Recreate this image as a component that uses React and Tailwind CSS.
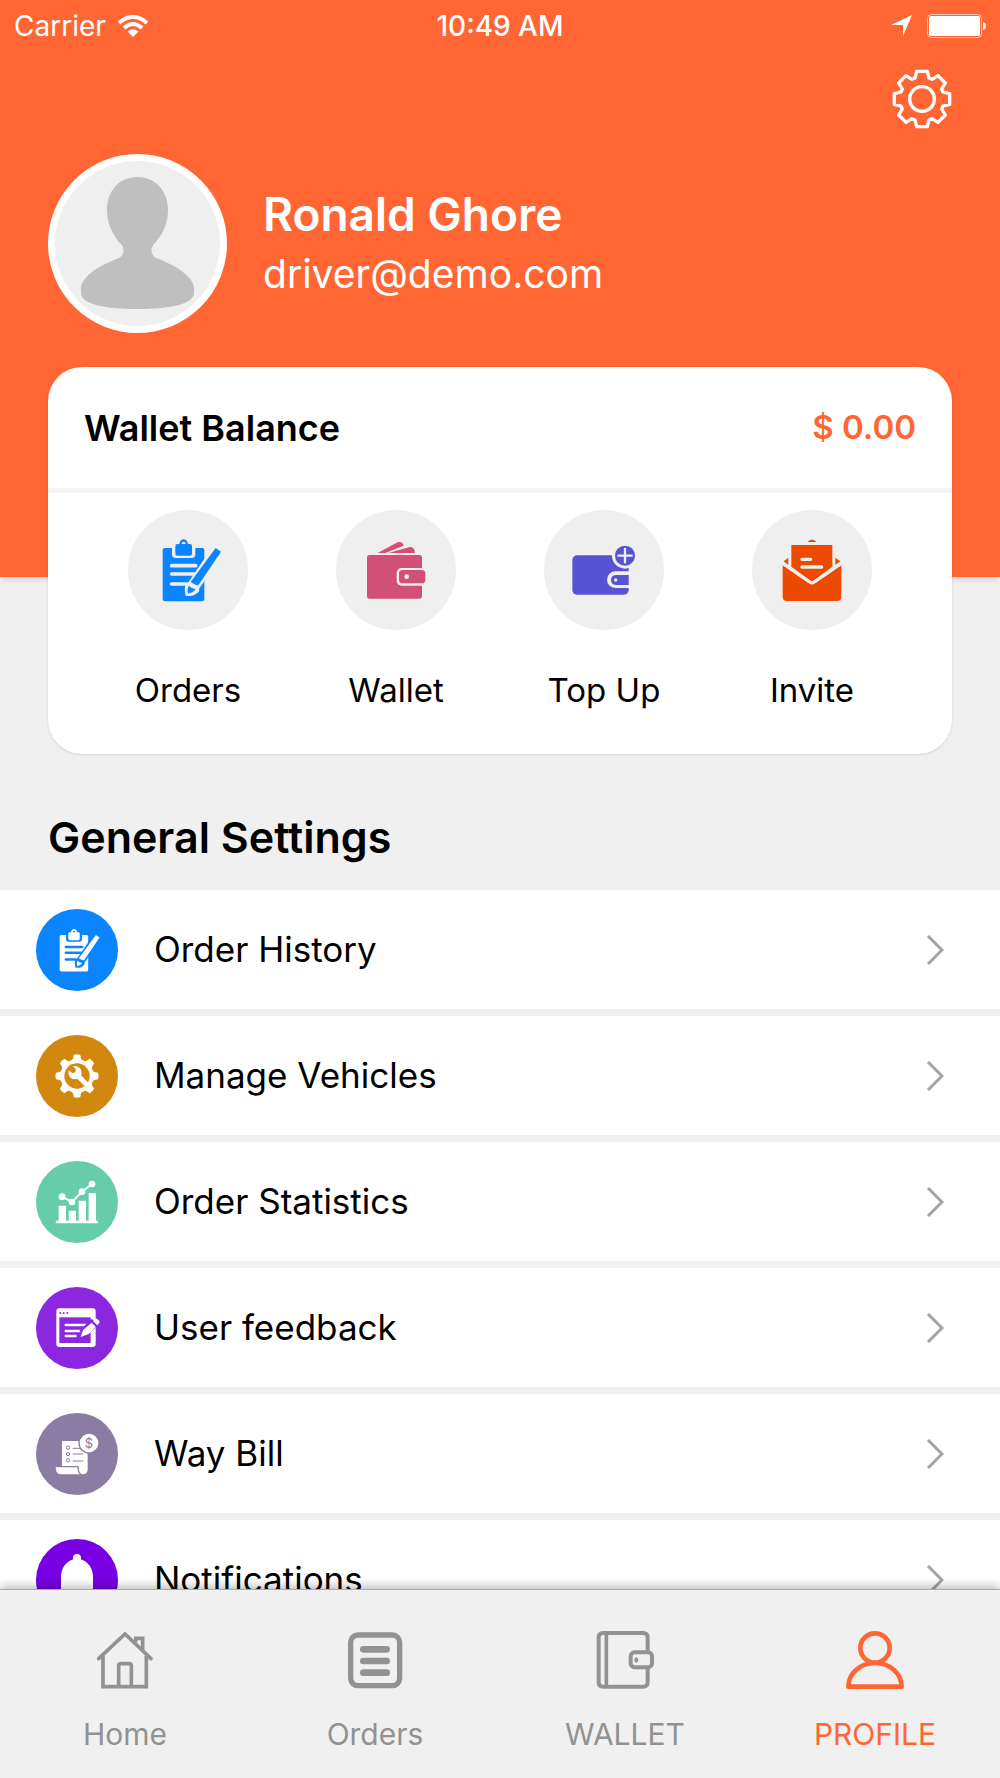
import React, { useState } from 'react';

const ClipboardIcon = ({ fg, bg, className }) => (
  <svg viewBox="26 30 360 360" className={className} fill={fg} aria-hidden="true">
    <rect x="130" y="144" width="125" height="160" rx="7" />
    <rect x="158" y="122" width="70" height="52" rx="11" fill={bg} />
    <path d="M174 132 H180 C181 113 205 113 206 132 H212 Q218 132 218 138 V161 Q218 167 212 167 H174 Q168 167 168 161 V138 Q168 132 174 132 Z" />
    <path d="M187 132 Q187 125 193 125 Q199 125 199 132 Z" fill={bg} />
    <path d="M157 197 H229 M157 222 H229 M157 252 H200" stroke={bg} strokeWidth="11" strokeLinecap="round" />
    <path d="M296 150 L214 270" stroke={bg} strokeWidth="38" />
    <path d="M203 247 C193 262 197 276 199 287 C214 291 232 286 241 270 Z" fill={bg} />
    <path d="M289 144 L305 155 L238 254 Q233 259 214 246 Z" />
    <path d="M208 257 Q216 266 229 267 Q222 279 206 280 Q203 268 208 257 Z" />
  </svg>
);

const WalletIcon = ({ fg, bg, className }) => (
  <svg viewBox="649 30 360 360" className={className} fill={fg} aria-hidden="true">
    <path d="M774 159 L834 127 Q848 122 852 137 L797 159 Z" />
    <path d="M806 159 L870 141 Q884 138 886 159 Z" />
    <rect x="742" y="165" width="165" height="131" rx="8" />
    <rect x="831" y="204" width="92" height="53" rx="15" fill={bg} />
    <rect x="838" y="210" width="79" height="40" rx="11" />
    <circle cx="861" cy="230" r="7" fill={bg} />
  </svg>
);

const TopUpIcon = ({ fg, bg, className }) => (
  <svg viewBox="42 30 360 360" className={className} fill={fg} aria-hidden="true">
    <rect x="127" y="166" width="169" height="118" rx="14" />
    <circle cx="285" cy="167" r="39" fill={bg} />
    <circle cx="285" cy="167" r="30" />
    <path d="M265 167 H305 M285 147 V187" stroke={bg} strokeWidth="7" strokeLinecap="round" />
    <path d="M298 214 H256 A25 25 0 0 0 256 264 H298 Z" fill={bg} />
    <path d="M296 225 H260 Q243 225 243 240 Q243 255 260 255 H296 Z" />
    <circle cx="257" cy="240" r="5" fill={bg} />
  </svg>
);

const InviteIcon = ({ fg, bg, className }) => (
  <svg viewBox="665 30 360 360" className={className} fill={fg} aria-hidden="true">
    <path d="M831 126 Q845 111 859 126 Z" />
    <path d="M783 135 H906 V200 L852 241 Q845 246 838 241 L783 200 Z" />
    <path d="M774 173 L760 184 L774 195 Z M915 173 L930 184 L915 195 Z" />
    <path d="M757 196 L836 250 Q845 257 854 250 L933 196 V290 Q933 303 920 303 H770 Q757 303 757 290 Z" />
    <path d="M757 190 L837 245 Q845 251 853 245 L933 190" fill="none" stroke={bg} strokeWidth="9" />
    <path d="M815 178 H841 M815 201 H874" stroke={bg} strokeWidth="10" strokeLinecap="round" />
  </svg>
);

const VehicleIcon = ({ fg, bg, className }) => (
  <svg viewBox="-123 -123 246 246" className={className} fill={fg} aria-hidden="true">
    <circle r="50" />
    {[0, 45, 90, 135, 180, 225, 270, 315].map((angle) => (
      <path key={angle} d="M-18 -44 L-12 -52 L-10 -63 Q0 -67 10 -63 L12 -52 L18 -44 Z" transform={`rotate(${angle})`} />
    ))}
    <circle r="38" fill={bg} />
    <path d="M-5 -9 L34 31" stroke={fg} strokeWidth="15" strokeLinecap="round" />
    <circle cx="-6" cy="-10" r="20" />
    <path d="M-31 -22 L-18 -35 L-4 -20 Q-2 -8 -14 -9 Z" fill={bg} />
  </svg>
);

const StatsIcon = ({ fg, className }) => (
  <svg viewBox="49 64 246 246" className={className} fill={fg} aria-hidden="true">
    <path d="M117 198 h22 v46 h-22 Z M147 213 h22 v31 h-22 Z M177 183 h22 v61 h-22 Z M207 160 h22 v84 h-22 Z" />
    <rect x="108" y="243" width="127" height="8" rx="3" />
    <path d="M127 171 L157 187 L187 156 L217 133" fill="none" stroke={fg} strokeWidth="6" />
    <circle cx="127" cy="171" r="10" />
    <circle cx="157" cy="187" r="10" />
    <circle cx="187" cy="156" r="10" />
    <circle cx="217" cy="133" r="10" />
  </svg>
);

const FeedbackIcon = ({ fg, bg, className }) => (
  <svg viewBox="49 441 246 246" className={className} fill={fg} aria-hidden="true">
    <rect x="110" y="505" width="118" height="116" rx="9" />
    <rect x="119" y="532" width="94" height="77" fill={bg} />
    <circle cx="122" cy="519" r="3" fill={bg} />
    <circle cx="132" cy="519" r="3" fill={bg} />
    <circle cx="143" cy="519" r="3" fill={bg} />
    <path d="M138 555 H197 M138 573 H190 M138 588 H168" stroke={fg} strokeWidth="7" strokeLinecap="round" />
    <path d="M226 546 L188 582" stroke={bg} strokeWidth="27" />
    <path d="M227 536 Q230 534 233 537 L239 543 Q241 547 238 550 L233 556 L220 543 Z" />
    <path d="M216 548 L228 560 L209 581 L183 591 L190 570 Z" />
  </svg>
);

const WayBillIcon = ({ fg, bg, className }) => (
  <svg viewBox="49 67 246 246" className={className} fill={fg} aria-hidden="true">
    <path d="M127 151 H204 V238 Q202 251 189 251 Q177 250 177 226 H127 Z" />
    <path d="M108 230 H173 Q174 245 180 251 H122 Q108 250 108 230 Z" />
    <g fill="none" stroke={bg} strokeWidth="3">
      <circle cx="145" cy="171" r="5" />
      <circle cx="145" cy="190" r="5" />
      <circle cx="145" cy="209" r="5" />
      <path d="M159 173 H186 M159 190 H191 M159 211 H191" />
    </g>
    <circle cx="208" cy="157" r="32" fill={bg} />
    <circle cx="208" cy="157" r="28" />
    <text x="208" y="171" textAnchor="middle" fontSize="39" fill={bg}>$</text>
  </svg>
);

const BellIcon = ({ fg, className }) => (
  <svg viewBox="49 444 246 246" className={className} fill={fg} aria-hidden="true">
    <circle cx="172" cy="501" r="12" />
    <path d="M124 555 C126 522 148 504 172 504 C196 504 218 522 220 555 V600 L232 622 H112 L124 600 Z" />
    <path d="M156 628 H188 Q186 642 172 642 Q158 642 156 628 Z" />
  </svg>
);

const SettingsIcon = () => (
  <svg viewBox="-90 -90 180 180" className="size-[60px]" fill="none" stroke="currentColor" strokeWidth="10" strokeLinejoin="round" aria-hidden="true">
    <path d="M-21 -63 L-16 -83 L16 -83 L21 -63 L30 -59 L48 -70 L70 -48 L59 -30 L63 -21 L83 -16 L83 16 L63 21 L59 30 L70 48 L48 70 L30 59 L21 63 L16 83 L-16 83 L-21 63 L-30 59 L-48 70 L-70 48 L-59 30 L-63 21 L-83 16 L-83 -16 L-63 -21 L-59 -30 L-70 -48 L-48 -70 L-30 -59 Z" />
    <circle r="37" />
  </svg>
);

const HomeTabIcon = () => (
  <svg viewBox="105 151 180 180" className="size-[60px]" fill="none" stroke="currentColor" strokeWidth="11" aria-hidden="true">
    <path d="M116 237 L195 163 L273 237" strokeLinecap="round" />
    <path d="M129 228 V321 H259 V228 M222 176 H248 V210 M227 178 V188" />
    <path d="M176 321 V259 Q176 252 183 252 H207 Q214 252 214 259 V321" />
  </svg>
);

const OrdersTabIcon = () => (
  <svg viewBox="857 151 180 180" className="size-[60px]" fill="none" stroke="currentColor" aria-hidden="true">
    <rect x="874" y="166" width="147" height="152" rx="22" strokeWidth="16" />
    <path d="M912 209 H982 M912 244 H982 M912 279 H982" strokeWidth="20" strokeLinecap="round" />
  </svg>
);

const WalletTabIcon = () => (
  <svg viewBox="167 151 180 180" className="size-[60px]" fill="none" stroke="currentColor" strokeWidth="12" aria-hidden="true">
    <path d="M325 214 V174 Q325 160 311 160 H191 Q178 160 178 174 V306 Q178 321 191 321 H311 Q325 321 325 306 V268" />
    <path d="M201 160 V321" strokeWidth="11" />
    <rect x="274" y="218" width="64" height="45" rx="12" />
    <ellipse cx="291" cy="241" rx="6" ry="8" fill="currentColor" stroke="none" />
  </svg>
);

const ProfileTabIcon = () => (
  <svg viewBox="913 151 180 180" className="size-[60px]" fill="none" stroke="currentColor" strokeWidth="14" strokeLinejoin="round" aria-hidden="true">
    <circle cx="1003" cy="205" r="44" />
    <path d="M923 321 H1083 C1083 280 1046 250 1003 250 C960 250 923 280 923 321 Z" />
  </svg>
);

const quickActions = [
  { label: 'Orders', icon: ClipboardIcon, color: '#0b85ff' },
  { label: 'Wallet', icon: WalletIcon, color: '#d24f78' },
  { label: 'Top Up', icon: TopUpIcon, color: '#5753d3' },
  { label: 'Invite', icon: InviteIcon, color: '#ec4a00' },
];

const settings = [
  { label: 'Order History', icon: ClipboardIcon, color: '#0b85ff', circle: 'bg-[#0b85ff]' },
  { label: 'Manage Vehicles', icon: VehicleIcon, color: '#d2870f', circle: 'bg-[#d2870f]' },
  { label: 'Order Statistics', icon: StatsIcon, color: '#66cca9', circle: 'bg-[#66cca9]' },
  { label: 'User feedback', icon: FeedbackIcon, color: '#8a27df', circle: 'bg-[#8a27df]' },
  { label: 'Way Bill', icon: WayBillIcon, color: '#8a7ca2', circle: 'bg-[#8a7ca2]' },
  { label: 'Notifications', icon: BellIcon, color: '#7900e2', circle: 'bg-[#7900e2]' },
];

const tabs = [
  { label: 'Home', icon: HomeTabIcon },
  { label: 'Orders', icon: OrdersTabIcon },
  { label: 'WALLET', icon: WalletTabIcon },
  { label: 'PROFILE', icon: ProfileTabIcon },
];

const StatusBar = () => (
  <div className="grid grid-cols-3 items-center h-[52px] px-[14px] text-[28px] leading-8">
    <div className="flex items-center gap-3">
      <span>Carrier</span>
      <svg viewBox="0 0 30 22" className="w-[30px] h-[22px]" fill="none" stroke="currentColor" strokeWidth="4" aria-hidden="true">
        <path d="M1 8 Q15 -4 29 8" />
        <path d="M6 13 Q15 5 24 13" />
        <path d="M15 22 L9.500 16.500 Q15 12 20.500 16.500 Z" fill="currentColor" stroke="none" />
      </svg>
    </div>
    <span className="text-center font-medium">10:49 AM</span>
    <div className="flex items-center justify-end gap-[14px]">
      <svg viewBox="0 0 22 22" className="size-[22px]" fill="currentColor" aria-hidden="true">
        <path d="M0 10 L21 0 L12 21 V10 Z" />
      </svg>
      <svg viewBox="0 0 59 24" className="w-[59px] h-6" fill="currentColor" aria-hidden="true">
        <rect x="0.500" y="0.500" width="54" height="23" rx="4" fill="none" stroke="currentColor" opacity="0.6" />
        <rect x="2" y="2" width="51" height="20" rx="2" />
        <path d="M56 8 Q59 9 59 12 Q59 15 56 16 Z" />
      </svg>
    </div>
  </div>
);

const App = () => {
  const [activeTab, setActiveTab] = useState('PROFILE');

  return (
    <div className="flex flex-col h-screen overflow-hidden bg-[#f0f0f0] text-black font-['Inter','Liberation_Sans',sans-serif]">
      <main className="flex-1 min-h-0 overflow-y-auto [scrollbar-width:none]">
        {/* Header */}
        <header className="bg-[#ff6633] text-white pb-[244px] shadow-md">
          <StatusBar />
          <div className="flex justify-end px-12 pt-[17px]">
            <button aria-label="Settings">
              <SettingsIcon />
            </button>
          </div>
          <div className="flex items-center gap-9 px-12 pt-[25px]">
            <svg viewBox="48 155 179 179" className="size-[179px] shrink-0" role="img" aria-label="Ronald Ghore">
              <circle cx="137.500" cy="244.500" r="86" fill="#efefef" stroke="#fff" strokeWidth="7" />
              <path d="M137.500 178 C119 178 107 192 107 211 C107 226 114 238 121 245 C125 250 124 256 119 259 C97 267 81 279 81 289 V294 C81 305 104 310 137.500 310 C171 310 194 305 194 294 V289 C194 279 178 267 156 259 C151 256 150 250 154 245 C161 238 168 226 168 211 C168 192 156 178 137.500 178 Z" fill="#bfbfbf" />
            </svg>
            <div>
              <h1 className="text-[46px] leading-[60px] font-semibold">Ronald Ghore</h1>
              <p className="text-[39px] leading-[60px]">driver@demo.com</p>
            </div>
          </div>
        </header>

        {/* Wallet card */}
        <section className="relative mx-12 -mt-[210px] bg-white rounded-[34px] shadow-sm">
          <div className="flex items-center justify-between h-[126px] px-9 border-b-5 border-[#f3f3f3] font-semibold">
            <h2 className="text-[36px]">Wallet Balance</h2>
            <span className="text-[#ff6633] text-[33px]">$ 0.00</span>
          </div>
          <div className="grid grid-cols-4 px-9 pt-[17px] pb-10">
            {quickActions.map(({ label, icon: Icon, color }) => (
              <button key={label} className="flex flex-col items-center gap-9">
                <span className="rounded-full bg-[#efefef]">
                  <Icon fg={color} bg="#efefef" className="size-[120px]" />
                </span>
                <span className="text-[33px] leading-12">{label}</span>
              </button>
            ))}
          </div>
        </section>

        {/* General settings */}
        <h2 className="px-12 pt-[53px] pb-[23px] text-[43px] leading-[60px] font-semibold">General Settings</h2>
        <ul>
          {settings.map(({ label, icon: Icon, color, circle }) => (
            <li key={label} className="bg-white border-b-7 border-[#f0f0f0]">
              <a href="#" className="flex items-center h-[119px] pl-9 pr-14">
                <span className={`rounded-full ${circle}`}>
                  <Icon fg="#fff" bg={color} className="size-[82px]" />
                </span>
                <span className="flex-1 pl-9 text-[35px]">{label}</span>
                <svg viewBox="0 0 18 30" className="w-[18px] h-[30px]" fill="none" stroke="#a3a3a3" strokeWidth="3" aria-hidden="true">
                  <path d="M2 1 L16 15 L2 29" />
                </svg>
              </a>
            </li>
          ))}
        </ul>
      </main>

      {/* Bottom tabs */}
      <nav className="relative grid grid-cols-4 h-[189px] bg-[#f0f0f0] border-t border-[#aaaaaa] shadow-[0_-2px_10px_rgba(0,0,0,0.3)]">
        {tabs.map(({ label, icon: Icon }) => (
          <a
            key={label}
            href="#"
            onClick={() => setActiveTab(label)}
            aria-current={activeTab === label ? 'page' : undefined}
            className={`flex flex-col items-center pt-10 gap-5 ${
              activeTab === label ? 'text-[#ff6633]' : 'text-[#929292]'
            }`}
          >
            <Icon />
            <span className="text-[30px] leading-12">{label}</span>
          </a>
        ))}
      </nav>
    </div>
  );
};

export default App;
